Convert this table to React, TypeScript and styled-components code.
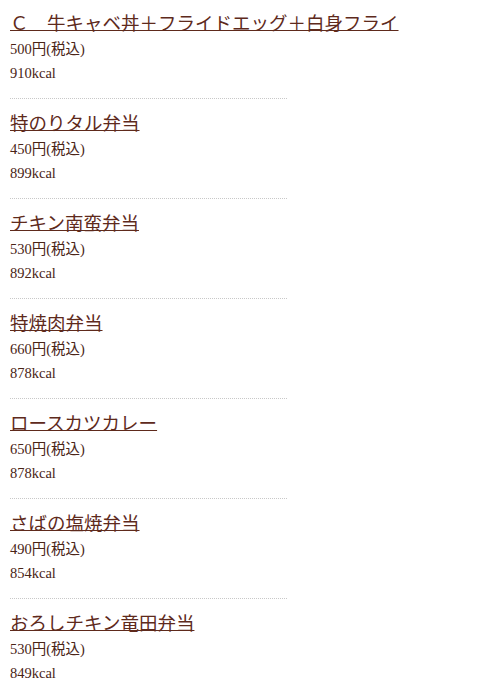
import styled, { createGlobalStyle } from 'styled-components';

const GlobalStyle = createGlobalStyle`
  html, body {
    margin: 0;
    padding: 0;
    background: #ffffff;
  }
`;

const MenuList = styled.div`
  padding: 9px 10px 0;
  width: 460px;
`;

const Item = styled.div`
  display: flex;
  flex-direction: column;
`;

const Title = styled.a`
  font-family: "Noto Sans CJK JP", "Noto Sans", sans-serif;
  font-size: 18.5px;
  line-height: 26px;
  color: #5e2a1c;
  text-decoration: underline;
  text-underline-offset: 0px;
  align-self: flex-start;
`;

const Info = styled.div<{ $first?: boolean }>`
  font-family: "Liberation Serif", "Noto Sans CJK JP", serif;
  font-size: 14.5px;
  line-height: 25px;
  color: #4a2416;
  margin-top: ${(p) => (p.$first ? '2px' : '-1px')};
`;

const Divider = styled.hr`
  border: none;
  border-top: 1px dotted #c8c8c8;
  width: 277px;
  margin: 12px 0 10px;
`;

const menu = [
  { name: 'Ｃ　牛キャベ丼＋フライドエッグ＋白身フライ', price: 500, kcal: 910 },
  { name: '特のりタル弁当', price: 450, kcal: 899 },
  { name: 'チキン南蛮弁当', price: 530, kcal: 892 },
  { name: '特焼肉弁当', price: 660, kcal: 878 },
  { name: 'ロースカツカレー', price: 650, kcal: 878 },
  { name: 'さばの塩焼弁当', price: 490, kcal: 854 },
  { name: 'おろしチキン竜田弁当', price: 530, kcal: 849 },
];

export default function App() {
  return (
    <>
      <GlobalStyle />
      <MenuList>
        {menu.map((m, i) => (
          <Item key={m.name}>
            <Title href="#">{m.name}</Title>
            <Info $first>{m.price}円(税込)</Info>
            <Info>{m.kcal}kcal</Info>
            {i < menu.length - 1 && <Divider />}
          </Item>
        ))}
      </MenuList>
    </>
  );
}
